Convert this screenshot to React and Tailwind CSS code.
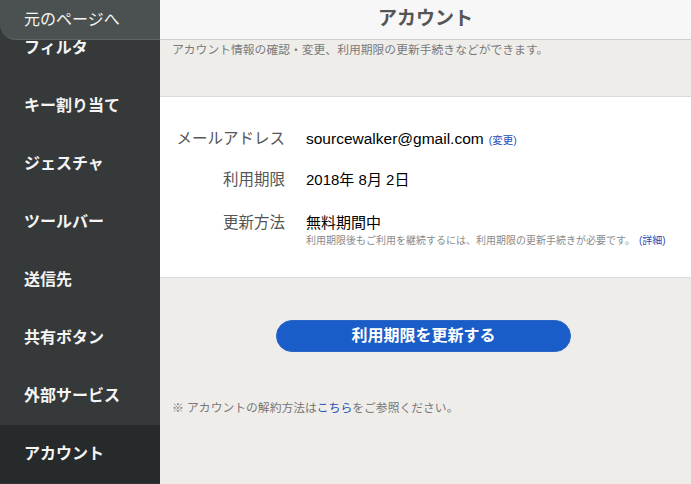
import React from 'react';

const menu = ['フィルタ', 'キー割り当て', 'ジェスチャ', 'ツールバー', '送信先', '共有ボタン', '外部サービス', 'アカウント'];

export default function App() {
  return (
    <div
      className="flex h-[484px] w-[691px] overflow-hidden"
      style={{ fontFamily: '"Liberation Sans", "Noto Sans CJK JP", sans-serif' }}
    >
      {/* Sidebar */}
      <div className="relative w-[160px] shrink-0 bg-[#35393a] pt-[19px]">
        <div className="absolute left-0 top-0 z-10 flex h-[40px] w-[160px] items-center rounded-bl-[16px] border-b border-[#5d6362] bg-[#4b5150] pl-[24px] text-[16px] text-[#f4f4f4]">
          元のページへ
        </div>
        {menu.map((item) => (
          <div
            key={item}
            className={`flex h-[58px] items-center pl-[24px] text-[16px] font-bold text-[#f4f4f4] ${
              item === 'アカウント' ? 'bg-[#262a2b]' : ''
            }`}
          >
            {item}
          </div>
        ))}
      </div>

      {/* Main */}
      <div className="flex min-w-0 flex-1 flex-col bg-[#efedea]">
        <div className="flex h-[40px] items-center justify-center border-b border-[#cfcfcf] bg-[#f7f7f7] text-[19px] font-bold text-[#555]">
          アカウント
        </div>
        <div className="h-[57px] border-b border-[#dadada] px-[12px] pt-[2px] text-[11.8px] leading-[16px] text-[#7a7a7a]">
          アカウント情報の確認・変更、利用期限の更新手続きなどができます。
        </div>

        <div className="h-[181px] border-b border-[#dadada] bg-white">
          <div className="mt-[30px] flex h-[24px] items-center gap-[21px]">
            <div className="w-[125px] text-right text-[15.5px] text-[#555]">メールアドレス</div>
            <div className="flex items-baseline text-[15.5px] text-black">
              sourcewalker@gmail.com
              <span className="ml-[5px] text-[10.5px] text-[#1f4fb8]">(変更)</span>
            </div>
          </div>
          <div className="mt-[17px] flex h-[24px] items-center gap-[21px]">
            <div className="w-[125px] text-right text-[15.5px] text-[#555]">利用期限</div>
            <div className="text-[15px] text-black">2018年 8月 2日</div>
          </div>
          <div className="mt-[21px] flex gap-[21px]">
            <div className="w-[125px] shrink-0 text-right text-[15.5px] leading-[20px] text-[#555]">更新方法</div>
            <div className="whitespace-nowrap">
              <div className="text-[15px] leading-[20px] text-black">無料期間中</div>
              <div className="mt-[1px] flex text-[10px] leading-[14px] text-[#8a8a8a]">
                <span>利用期限後もご利用を継続するには、利用期限の更新手続きが必要です。</span>
                <span className="ml-[4px] text-[#1f4fb8]">(詳細)</span>
              </div>
            </div>
          </div>
        </div>

        <button className="ml-[116px] mt-[42px] flex h-[32px] w-[295px] items-center justify-center rounded-full border border-[#2a66c8] bg-[#1a5dc8] text-[16px] font-bold text-white">
          利用期限を更新する
        </button>

        <div className="mt-[47px] px-[12px] text-[11.8px] leading-[18px] text-[#777]">
          ※ アカウントの解約方法は<span className="text-[#1f4fb8]">こちら</span>をご参照ください。
        </div>
      </div>
    </div>
  );
}
